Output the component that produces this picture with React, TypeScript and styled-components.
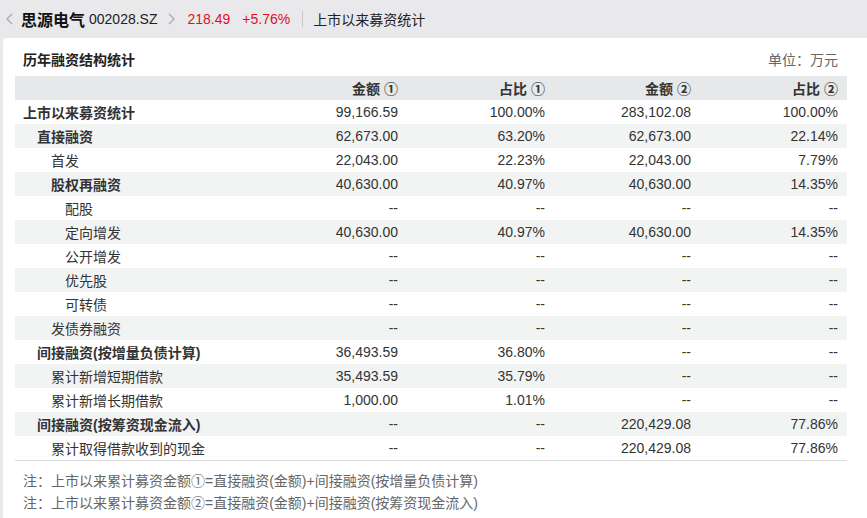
import React from "react";
import styled, { createGlobalStyle } from "styled-components";

const Global = createGlobalStyle`
  html, body { margin: 0; padding: 0; background: #e9e9eb; }
  body { font-family: "Liberation Sans", "Noto Sans CJK SC", sans-serif; color: #333; }
`;

const Page = styled.div`
  width: 867px;
  height: 518px;
  overflow: hidden;
  background: #e9e9eb;
`;

const TopBar = styled.div`
  height: 38px;
  display: flex;
  align-items: center;
  padding-left: 4px;
  font-size: 14px;
  white-space: nowrap;
`;

const Chevron = styled.span<{ $left: number; $right: number }>`
  color: #aaa;
  display: inline-flex;
  align-items: center;
  margin: 0 ${(p) => p.$right}px 0 ${(p) => p.$left}px;
`;

const StockName = styled.span`
  font-size: 16px;
  font-weight: bold;
  color: #111;
  margin-right: 4px;
`;

const Code = styled.span`
  font-size: 14px;
  color: #222;
`;

const Red = styled.span<{ $gap: number }>`
  color: #e0101e;
  font-size: 14px;
  margin-right: ${(p) => p.$gap}px;
`;

const Divider = styled.span`
  width: 1px;
  height: 16px;
  background: #c8c8c8;
  margin-right: 10px;
`;

const PageTitle = styled.span`
  font-size: 14px;
  color: #222;
`;

const Panel = styled.div`
  margin-left: 3px;
  background: #fff;
  border-radius: 4px 0 0 0;
  padding: 0 20px 20px 12px;
  height: 500px;
`;

const TitleRow = styled.div`
  height: 38px;
  display: flex;
  align-items: center;
  justify-content: space-between;
  padding: 4px 0 0 8px;
  box-sizing: border-box;
  font-size: 14px;
`;

const Title = styled.span`
  font-weight: bold;
  color: #222;
`;

const Unit = styled.span`
  color: #666;
  margin-right: 9px;
`;

const Table = styled.table`
  width: 832px;
  border-collapse: collapse;
  table-layout: fixed;
  font-size: 14px;
  border-bottom: 1px solid #dcdcdc;
`;

const HeadCell = styled.th`
  height: 24px;
  padding: 0 9px 0 0;
  background: #e7e8e9;
  text-align: right;
  font-weight: bold;
  color: #333;
`;

const Row = styled.tr<{ $alt: boolean }>`
  background: ${(p) => (p.$alt ? "#f2f3f3" : "#fff")};
`;

const LabelCell = styled.td<{ $level: number; $bold: boolean }>`
  height: 24px;
  padding: 0 0 0 ${(p) => 8 + p.$level * 14}px;
  font-weight: ${(p) => (p.$bold ? "bold" : "normal")};
  color: #333;
  white-space: nowrap;
`;

const NumCell = styled.td`
  height: 24px;
  padding: 0 9px 0 0;
  text-align: right;
  color: #333;
`;

const Notes = styled.div`
  padding: 9px 0 0 8px;
  font-size: 14px;
  color: #666;
  line-height: 22px;
`;

type R = { label: string; level: number; bold: boolean; v: [string, string, string, string] };

const rows: R[] = [
  { label: "上市以来募资统计", level: 0, bold: true, v: ["99,166.59", "100.00%", "283,102.08", "100.00%"] },
  { label: "直接融资", level: 1, bold: true, v: ["62,673.00", "63.20%", "62,673.00", "22.14%"] },
  { label: "首发", level: 2, bold: false, v: ["22,043.00", "22.23%", "22,043.00", "7.79%"] },
  { label: "股权再融资", level: 2, bold: true, v: ["40,630.00", "40.97%", "40,630.00", "14.35%"] },
  { label: "配股", level: 3, bold: false, v: ["--", "--", "--", "--"] },
  { label: "定向增发", level: 3, bold: false, v: ["40,630.00", "40.97%", "40,630.00", "14.35%"] },
  { label: "公开增发", level: 3, bold: false, v: ["--", "--", "--", "--"] },
  { label: "优先股", level: 3, bold: false, v: ["--", "--", "--", "--"] },
  { label: "可转债", level: 3, bold: false, v: ["--", "--", "--", "--"] },
  { label: "发债券融资", level: 2, bold: false, v: ["--", "--", "--", "--"] },
  { label: "间接融资(按增量负债计算)", level: 1, bold: true, v: ["36,493.59", "36.80%", "--", "--"] },
  { label: "累计新增短期借款", level: 2, bold: false, v: ["35,493.59", "35.79%", "--", "--"] },
  { label: "累计新增长期借款", level: 2, bold: false, v: ["1,000.00", "1.01%", "--", "--"] },
  { label: "间接融资(按筹资现金流入)", level: 1, bold: true, v: ["--", "--", "220,429.08", "77.86%"] },
  { label: "累计取得借款收到的现金", level: 2, bold: false, v: ["--", "--", "220,429.08", "77.86%"] },
];

const ChevronIcon = ({ dir }: { dir: "l" | "r" }) => (
  <svg width="7" height="12" viewBox="0 0 7 12" fill="none" stroke="#aaa" strokeWidth="1.3">
    {dir === "l" ? <path d="M6 1 L1 6 L6 11" /> : <path d="M1 1 L6 6 L1 11" />}
  </svg>
);

export default function App() {
  return (
    <Page>
      <Global />
      <TopBar>
        <Chevron $left={2} $right={8}><ChevronIcon dir="l" /></Chevron>
        <StockName>思源电气</StockName>
        <Code>002028.SZ</Code>
        <Chevron $left={10} $right={13}><ChevronIcon dir="r" /></Chevron>
        <Red $gap={12}>218.49</Red>
        <Red $gap={12}>+5.76%</Red>
        <Divider />
        <PageTitle>上市以来募资统计</PageTitle>
      </TopBar>
      <Panel>
        <TitleRow>
          <Title>历年融资结构统计</Title>
          <Unit>单位：万元</Unit>
        </TitleRow>
        <Table>
          <colgroup>
            <col style={{ width: 245 }} />
            <col style={{ width: 147 }} />
            <col style={{ width: 147 }} />
            <col style={{ width: 146 }} />
            <col style={{ width: 147 }} />
          </colgroup>
          <thead>
            <tr>
              <HeadCell />
              <HeadCell>金额 ①</HeadCell>
              <HeadCell>占比 ①</HeadCell>
              <HeadCell>金额 ②</HeadCell>
              <HeadCell>占比 ②</HeadCell>
            </tr>
          </thead>
          <tbody>
            {rows.map((r, i) => (
              <Row key={r.label} $alt={i % 2 === 1}>
                <LabelCell $level={r.level} $bold={r.bold}>{r.label}</LabelCell>
                {r.v.map((x, j) => (
                  <NumCell key={j}>{x}</NumCell>
                ))}
              </Row>
            ))}
          </tbody>
        </Table>
        <Notes>
          <div>注：上市以来累计募资金额①=直接融资(金额)+间接融资(按增量负债计算)</div>
          <div>注：上市以来累计募资金额②=直接融资(金额)+间接融资(按筹资现金流入)</div>
        </Notes>
      </Panel>
    </Page>
  );
}
